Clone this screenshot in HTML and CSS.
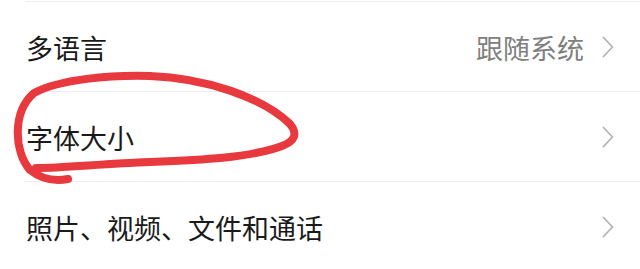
FILE: index.html
```html
<!DOCTYPE html>
<html lang="zh-CN">
<head>
  <meta charset="UTF-8">
  <meta name="viewport" content="width=device-width, initial-scale=1.0">
  <title>设置</title>
  <link rel="stylesheet" href="styles.css">
</head>
<body>
  <div class="settings">
    <div class="setting-row">
      <span class="setting-label">多语言</span>
      <span class="setting-value">跟随系统</span>
      <svg class="chevron" viewBox="0 0 12 22"><path d="M1.5 1.5 L10.5 11 L1.5 20.5"/></svg>
    </div>
    <div class="setting-row">
      <span class="setting-label">字体大小</span>
      <svg class="chevron" viewBox="0 0 12 22"><path d="M1.5 1.5 L10.5 11 L1.5 20.5"/></svg>
    </div>
    <div class="setting-row">
      <span class="setting-label">照片、视频、文件和通话</span>
      <svg class="chevron" viewBox="0 0 12 22"><path d="M1.5 1.5 L10.5 11 L1.5 20.5"/></svg>
    </div>

    <!-- hand-drawn highlight over the font size row -->
    <svg class="scribble" viewBox="0 0 640 269">
      <path d="M68 179 Q46 183 30 170 C14 152 12 112 34 93 C60 79 110 75 150 76 C205 78 262 97 290 124 C298 134 295 141 282 146 C250 158 200 160 150 162 C100 164 62 168 36 168"/>
    </svg>
  </div>
</body>
</html>
```

FILE: styles.css
```css
body {
  margin: 0;
  background-color: #fff;
  font-family: "Noto Sans CJK SC", "Noto Sans", sans-serif;
  color: #1a1a1a;
}
.settings {
  position: relative;
  padding-top: 1px;
  height: 268px;
  overflow: hidden;
}
.setting-row {
  display: flex;
  align-items: center;
  height: 89px;
  margin-left: 25px;
  padding-right: 26px;
  border-top: 1px solid #ededed;
}
.setting-label {
  flex: 1;
  font-size: 27px;
  line-height: 1;
  padding-left: 1px;
  padding-top: 2px;
}
.setting-value {
  font-size: 27px;
  line-height: 1;
  color: #808080;
  margin-right: 18px;
  padding-top: 2px;
}
.chevron {
  width: 12px;
  height: 22px;
  fill: none;
  stroke: #b3b3b3;
  stroke-width: 1.8;
  stroke-linecap: round;
  stroke-linejoin: round;
}
.scribble {
  position: absolute;
  left: 0;
  top: 0;
  width: 640px;
  height: 269px;
  fill: none;
  stroke: #e8393e;
  stroke-width: 8;
  stroke-linecap: round;
  stroke-linejoin: round;
}
```
